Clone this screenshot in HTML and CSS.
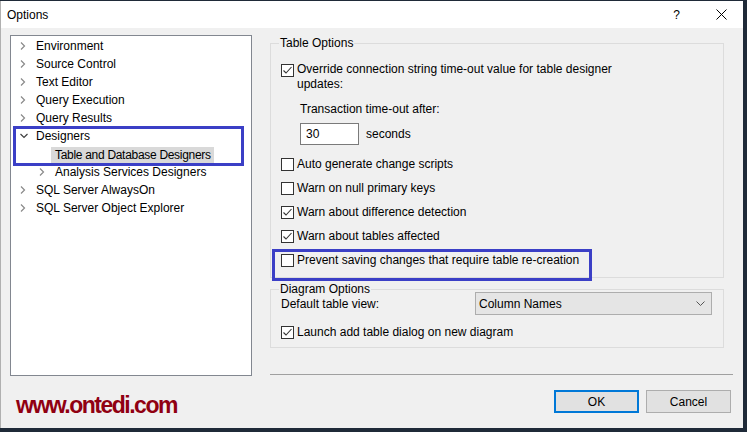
FILE: index.html
```html
<!DOCTYPE html>
<html lang="en">
<head>
  <meta charset="UTF-8">
  <title>Options</title>
  <link rel="stylesheet" href="styles.css">
</head>
<body>

<div class="window">
  <div class="titlebar">
    <span class="title">Options</span>
    <span class="help">?</span>
    <svg class="close" width="11" height="11" viewBox="0 0 11 11"><path d="M0.5 0.5 L10.5 10.5 M10.5 0.5 L0.5 10.5" stroke="#000" stroke-width="1" fill="none"/></svg>
  </div>

  <div class="content">
    <div class="left">
      <div class="tree">
        <div class="node"><span class="twisty"><svg width="6" height="8" viewBox="0 0 6 8"><path d="M1 0.5 L4.5 4 L1 7.5" stroke="#8a8a8a" stroke-width="1.2" fill="none"/></svg></span>Environment</div>
        <div class="node"><span class="twisty"><svg width="6" height="8" viewBox="0 0 6 8"><path d="M1 0.5 L4.5 4 L1 7.5" stroke="#8a8a8a" stroke-width="1.2" fill="none"/></svg></span>Source Control</div>
        <div class="node"><span class="twisty"><svg width="6" height="8" viewBox="0 0 6 8"><path d="M1 0.5 L4.5 4 L1 7.5" stroke="#8a8a8a" stroke-width="1.2" fill="none"/></svg></span>Text Editor</div>
        <div class="node"><span class="twisty"><svg width="6" height="8" viewBox="0 0 6 8"><path d="M1 0.5 L4.5 4 L1 7.5" stroke="#8a8a8a" stroke-width="1.2" fill="none"/></svg></span>Query Execution</div>
        <div class="node"><span class="twisty"><svg width="6" height="8" viewBox="0 0 6 8"><path d="M1 0.5 L4.5 4 L1 7.5" stroke="#8a8a8a" stroke-width="1.2" fill="none"/></svg></span>Query Results</div>
        <div class="marked">
          <div class="node"><span class="twisty"><svg width="8" height="6" viewBox="0 0 8 6"><path d="M0.5 1 L4 4.5 L7.5 1" stroke="#404040" stroke-width="1.2" fill="none"/></svg></span>Designers</div>
          <div class="node child"><span class="twisty"></span><span class="selected">Table and Database Designers</span></div>
        </div>
        <div class="node child"><span class="twisty"><svg width="6" height="8" viewBox="0 0 6 8"><path d="M1 0.5 L4.5 4 L1 7.5" stroke="#8a8a8a" stroke-width="1.2" fill="none"/></svg></span>Analysis Services Designers</div>
        <div class="node"><span class="twisty"><svg width="6" height="8" viewBox="0 0 6 8"><path d="M1 0.5 L4.5 4 L1 7.5" stroke="#8a8a8a" stroke-width="1.2" fill="none"/></svg></span>SQL Server AlwaysOn</div>
        <div class="node"><span class="twisty"><svg width="6" height="8" viewBox="0 0 6 8"><path d="M1 0.5 L4.5 4 L1 7.5" stroke="#8a8a8a" stroke-width="1.2" fill="none"/></svg></span>SQL Server Object Explorer</div>
      </div>
      <div class="brand">www.ontedi.com</div>
    </div>

    <div class="right">
      <fieldset class="group table-opts">
        <legend>Table Options</legend>
        <div class="check-row multi">
          <svg class="box" width="13" height="13" viewBox="0 0 13 13"><rect x="0.5" y="0.5" width="12" height="12" fill="#fff" stroke="#333"/><path d="M2.5 6.5 L5 9 L10.5 3" stroke="#333" stroke-width="1.1" fill="none"/></svg>
          <span class="wrap-text">Override connection string time-out value for table designer updates:</span>
        </div>
        <div class="sub-label">Transaction time-out after:</div>
        <div class="timeout-row">
          <div class="textbox">30</div>
          <span>seconds</span>
        </div>
        <div class="check-row first">
          <svg class="box" width="13" height="13" viewBox="0 0 13 13"><rect x="0.5" y="0.5" width="12" height="12" fill="#fff" stroke="#333"/></svg>
          <span>Auto generate change scripts</span>
        </div>
        <div class="check-row">
          <svg class="box" width="13" height="13" viewBox="0 0 13 13"><rect x="0.5" y="0.5" width="12" height="12" fill="#fff" stroke="#333"/></svg>
          <span>Warn on null primary keys</span>
        </div>
        <div class="check-row">
          <svg class="box" width="13" height="13" viewBox="0 0 13 13"><rect x="0.5" y="0.5" width="12" height="12" fill="#fff" stroke="#333"/><path d="M2.5 6.5 L5 9 L10.5 3" stroke="#333" stroke-width="1.1" fill="none"/></svg>
          <span>Warn about difference detection</span>
        </div>
        <div class="check-row">
          <svg class="box" width="13" height="13" viewBox="0 0 13 13"><rect x="0.5" y="0.5" width="12" height="12" fill="#fff" stroke="#333"/><path d="M2.5 6.5 L5 9 L10.5 3" stroke="#333" stroke-width="1.1" fill="none"/></svg>
          <span>Warn about tables affected</span>
        </div>
        <div class="check-row flagged">
          <svg class="box" width="13" height="13" viewBox="0 0 13 13"><rect x="0.5" y="0.5" width="12" height="12" fill="#fff" stroke="#333"/></svg>
          <span>Prevent saving changes that require table re-creation</span>
        </div>
      </fieldset>

      <fieldset class="group diagram-opts">
        <legend>Diagram Options</legend>
        <div class="view-row">
          <span>Default table view:</span>
          <div class="combo">
            <span>Column Names</span>
            <svg width="9" height="5" viewBox="0 0 9 5"><path d="M0.5 0.5 L4.5 4.5 L8.5 0.5" stroke="#555" stroke-width="1" fill="none"/></svg>
          </div>
        </div>
        <div class="check-row launch">
          <svg class="box" width="13" height="13" viewBox="0 0 13 13"><rect x="0.5" y="0.5" width="12" height="12" fill="#fff" stroke="#333"/><path d="M2.5 6.5 L5 9 L10.5 3" stroke="#333" stroke-width="1.1" fill="none"/></svg>
          <span>Launch add table dialog on new diagram</span>
        </div>
      </fieldset>

      <div class="separator"></div>

      <div class="buttons">
        <button class="btn default">OK</button>
        <button class="btn">Cancel</button>
      </div>
    </div>
  </div>
</div>

</body>
</html>
```

FILE: styles.css
```css
* { box-sizing: border-box; }
body { margin: 0; background: #1f2a38; font-family: "Liberation Sans", Arial, sans-serif; font-size: 12px; color: #000; }

.window { width: 743px; height: 427px; margin-top: 1px; background: #f0f0f0; border-left: 1px solid #b0b0b0; }

.titlebar { height: 27px; background: #fff; display: flex; align-items: center; padding: 0 16px 0 6px; }
.title { flex: 1; }
.help { margin-right: 36px; }
.close { display: block; }

.content { display: flex; gap: 18px; padding: 7px 10px 0 9px; }

/* tree */
.left { width: 242px; }
.tree { height: 341px; background: #fff; border: 1px solid #828790; padding-top: 1px; }
.node { display: flex; align-items: center; height: 18px; padding-left: 9px; white-space: nowrap; }
.node.child { padding-left: 28px; }
.twisty { width: 16px; display: flex; align-items: center; }
.twisty svg { display: block; }
.selected { background: #d9d9d9; margin-left: -4px; padding: 0 3px 0 4px; line-height: 16px; margin-top: 2px; letter-spacing: -0.3px; }
.marked { position: relative; }
.marked::after { content: ""; position: absolute; left: 2px; right: 7px; top: -1px; bottom: -3px; border: 3px solid #3b3fc6; }

.brand { margin: 17px 0 0 6px; font-size: 23px; font-weight: bold; letter-spacing: -1.5px; line-height: 24px; color: #900012; }

/* right pane */
.right { width: 463px; }
.group { margin: 0 9px 0 0; min-width: 0; border: 1px solid #dcdcdc; padding: 0 0 5px 10px; }
.group legend { padding: 0 1px; margin-left: -2px; line-height: 16px; }

.check-row { display: flex; align-items: center; gap: 3px; height: 24px; }
.check-row .box { display: block; flex: none; }
.check-row.multi { align-items: flex-start; height: auto; margin-top: 11px; line-height: 15px; }
.check-row.multi .box { margin-top: 2px; }
.wrap-text { width: 330px; }
.check-row.first { margin-top: 7px; }
.check-row.flagged { position: relative; }
.check-row.flagged::after { content: ""; position: absolute; left: -9px; top: 1px; width: 314px; height: 26px; border: 3px solid #3b3fc6; }

.sub-label { margin: 10px 0 0 19px; line-height: 15px; }
.timeout-row { display: flex; align-items: center; gap: 7px; margin: 6px 0 0 19px; }
.textbox { width: 59px; height: 22px; background: #fff; border: 1px solid #7a7a7a; padding-left: 5px; line-height: 20px; }

.diagram-opts { margin-top: 3px; padding-bottom: 3px; }
.view-row { display: flex; align-items: center; justify-content: space-between; height: 23px; margin-top: -5px; padding-right: 11px; }
.combo { width: 237px; height: 23px; background: #e5e5e5; border: 1px solid #adadad; display: flex; align-items: center; justify-content: space-between; padding: 0 6px 0 3px; }
.combo svg { display: block; }
.check-row.launch { margin-top: 5px; }

.separator { height: 1px; background: #a0a0a0; margin-top: 26px; }

.buttons { display: flex; justify-content: flex-end; gap: 7px; margin: 15px 2px 0 0; }
.btn { width: 85px; height: 23px; font: inherit; background: #e1e1e1; border: 1px solid #adadad; padding: 0; color: #000; }
.btn.default { border: 2px solid #0078d7; }
```
